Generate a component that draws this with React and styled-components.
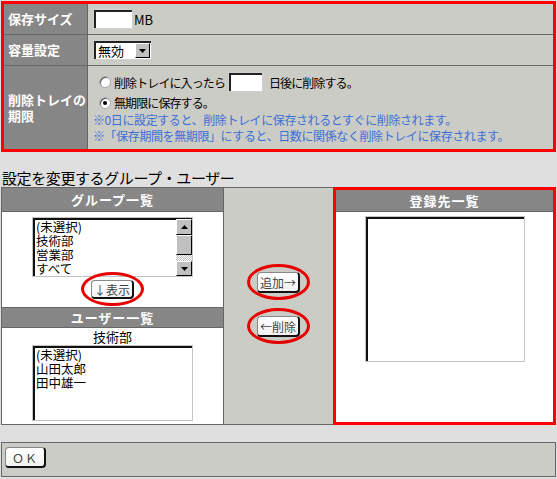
import styled, { createGlobalStyle } from 'styled-components'

const GlobalStyle = createGlobalStyle`
  body {
    margin: 0;
    background: #dfdfdf;
    font-family: "Noto Sans CJK JP", "Noto Sans", sans-serif;
    font-size: 12px;
    color: #000;
  }
  * { box-sizing: border-box; }
`

const darkTexture = `
  background-color: #878787;
  background-image: repeating-conic-gradient(#8b8b8b 0% 25%, #828282 0% 50%);
  background-size: 2px 2px;
`
const lightTexture = `
  background-color: #cbccc5;
  background-image: repeating-conic-gradient(#cfd0c9 0% 25%, #c7c8c1 0% 50%);
  background-size: 2px 2px;
`

const Page = styled.div`
  width: 557px;
  padding: 1px 1px 0 1px;
`

const SettingsBox = styled.div`
  border: 3px solid #f00;
  display: grid;
  grid-template-columns: 84px 1fr;
  grid-template-rows: 31px 31px 83px;
`

const Label = styled.div`
  ${darkTexture}
  display: flex;
  align-items: center;
  padding-left: 4px;
  color: #fff;
  font-weight: bold;
  font-size: 13px;
  line-height: 16px;
  border-right: 1px solid #666;
  border-bottom: ${p => (p.$last ? 'none' : '1px solid #666')};
`

const Value = styled.div`
  ${lightTexture}
  display: flex;
  align-items: center;
  padding-left: 5px;
  border-bottom: ${p => (p.$last ? 'none' : '1px solid #666')};
`

const ValueStack = styled.div`
  ${lightTexture}
  display: flex;
  flex-direction: column;
  padding: 5px 0 0 5px;
`

const TextBox = styled.div`
  width: ${p => p.$w}px;
  height: 20px;
  flex-shrink: 0;
  background: #fff;
  border: 1px solid #d0d0d0;
  box-shadow: inset 2px 2px 0 #222;
  margin: 0 ${p => p.$mr || 0}px 0 ${p => p.$ml || 0}px;
`

const Unit = styled.span`
  font-size: 13px;
  margin-left: 1px;
`

const Select = styled.div`
  width: 59px;
  height: 20px;
  background: #fff;
  border: 1px solid #d0d0d0;
  box-shadow: inset 2px 2px 0 #222;
  display: flex;
  align-items: center;
  padding: 2px 1px 1px 4px;
  font-size: 13px;
`

const SelectText = styled.span`
  flex: 1;
`

const ArrowBtn = styled.span`
  width: 15px;
  height: 15px;
  background: #c0c0c0;
  border: 1px solid;
  border-color: #fff #000 #000 #fff;
  display: flex;
  align-items: center;
  justify-content: center;
`

const RadioLine = styled.div`
  display: flex;
  align-items: center;
  height: ${p => p.$h}px;
  padding-left: 6px;
  font-size: 12px;
  letter-spacing: -0.9px;
`

const Radio = styled.span`
  width: 12px;
  height: 12px;
  border-radius: 50%;
  background: #fff;
  border: 1px solid #aaa;
  box-shadow: inset 1px 1px 0 #555;
  margin-right: 3px;
  display: flex;
  align-items: center;
  justify-content: center;
  &::after {
    content: '';
    width: 4px;
    height: 4px;
    border-radius: 50%;
    background: ${p => (p.$checked ? '#000' : 'transparent')};
  }
`

const Note = styled.div`
  color: #3b6fd8;
  font-size: 12px;
  letter-spacing: -0.4px;
  height: 16px;
  line-height: 16px;
`

const Heading = styled.div`
  height: 35px;
  padding: 16px 0 0 1px;
  font-size: 15px;
  line-height: 19px;
  letter-spacing: -0.4px;
`

const Columns = styled.div`
  display: flex;
  height: 238px;
`

const LeftColumn = styled.div`
  width: 223px;
  border: 1px solid #666;
  background: #fff;
  display: flex;
  flex-direction: column;
`

const MiddleColumn = styled.div`
  ${lightTexture}
  width: 109px;
  border-top: 1px solid #666;
  border-bottom: 1px solid #666;
  display: flex;
  flex-direction: column;
  align-items: center;
  gap: 23px;
  padding-top: 84px;
`

const RightColumn = styled.div`
  flex: 1;
  border: 3px solid #f00;
  background: #fff;
  display: flex;
  flex-direction: column;
  align-items: center;
`

const ListHeader = styled.div`
  ${darkTexture}
  align-self: stretch;
  height: ${p => p.$h}px;
  flex-shrink: 0;
  display: flex;
  align-items: center;
  justify-content: center;
  color: #fff;
  font-weight: bold;
  font-size: 13px;
  letter-spacing: 1px;
  border-bottom: 1px solid #666;
  border-top: ${p => (p.$top ? '1px solid #666' : 'none')};
`

const Area = styled.div`
  height: ${p => p.$h}px;
  display: flex;
  flex-direction: column;
  align-items: center;
  padding-top: ${p => p.$pt}px;
  gap: ${p => p.$gap || 0}px;
`

const Caption = styled.div`
  font-size: 13px;
  line-height: 16px;
`

const ListBox = styled.div`
  width: ${p => p.$w}px;
  height: ${p => p.$h}px;
  margin-top: ${p => p.$mt || 0}px;
  background: #fff;
  border: 1px solid #c4c4c4;
  box-shadow: inset 2px 2px 0 #111;
  display: flex;
  padding: 2px 0 0 2px;
  flex-shrink: 0;
`

const Items = styled.div`
  flex: 1;
  padding-left: 1px;
  font-size: 12.5px;
  line-height: 14px;
`

const Scrollbar = styled.div`
  width: 16px;
  display: flex;
  flex-direction: column;
  margin-top: -1px;
`

const ScrollBtn = styled.div`
  height: ${p => p.$h}px;
  background: #c0c0c0;
  border: 1px solid;
  border-color: #fff #000 #000 #fff;
  display: flex;
  align-items: center;
  justify-content: center;
`

const Track = styled.div`
  flex: 1;
  background-image: repeating-conic-gradient(#fff 0% 25%, #c0c0c0 0% 50%);
  background-size: 2px 2px;
`

const Marked = styled.span`
  position: relative;
  display: inline-flex;
  &::after {
    content: '';
    position: absolute;
    inset: -8px -10px -7px -10px;
    border: 3px solid #e80000;
    border-radius: 50%;
  }
`

const Button = styled.button`
  height: ${p => p.$h || 19}px;
  padding: 0 ${p => p.$px || 2}px;
  font-family: inherit;
  font-size: 12px;
  letter-spacing: ${p => p.$ls || 0}px;
  color: #444;
  background: linear-gradient(#fff, #f2f2f2);
  border-style: solid;
  border-width: 1px 2px 2px 1px;
  border-color: #888 #111 #111 #888;
  border-radius: 4px;
  display: flex;
  align-items: center;
  justify-content: center;
`

const Footer = styled.div`
  ${lightTexture}
  margin-top: 17px;
  height: 35px;
  border: 1px solid #666;
  padding: 4px 0 0 3px;
`

const Triangle = ({ up }) => (
  <svg width="7" height="4" viewBox="0 0 7 4">
    <path d={up ? 'M3.5 0 L7 4 L0 4 Z' : 'M0 0 L7 0 L3.5 4 Z'} fill="#000" />
  </svg>
)

const App = () => {
  return (
    <Page>
      <GlobalStyle />
      <SettingsBox>
        <Label>保存サイズ</Label>
        <Value>
          <TextBox $w={40} />
          <Unit>MB</Unit>
        </Value>
        <Label>容量設定</Label>
        <Value>
          <Select>
            <SelectText>無効</SelectText>
            <ArrowBtn><Triangle /></ArrowBtn>
          </Select>
        </Value>
        <Label $last>削除トレイの<br />期限</Label>
        <ValueStack>
          <RadioLine $h={22}>
            <Radio />
            削除トレイに入ったら<TextBox $w={35} $ml={3} $mr={6} />日後に削除する。
          </RadioLine>
          <RadioLine $h={19}>
            <Radio $checked />
            無期限に保存する。
          </RadioLine>
          <Note>※0日に設定すると、削除トレイに保存されるとすぐに削除されます。</Note>
          <Note>※「保存期間を無期限」にすると、日数に関係なく削除トレイに保存されます。</Note>
        </ValueStack>
      </SettingsBox>

      <Heading>設定を変更するグループ・ユーザー</Heading>

      <Columns>
        <LeftColumn>
          <ListHeader $h={24}>グループ一覧</ListHeader>
          <Area $h={95} $pt={5} $gap={3}>
            <ListBox $w={161} $h={60}>
              <Items>
                (未選択)<br />技術部<br />営業部<br />すべて
              </Items>
              <Scrollbar>
                <ScrollBtn $h={16}><Triangle up /></ScrollBtn>
                <ScrollBtn $h={20} />
                <Track />
                <ScrollBtn $h={15}><Triangle /></ScrollBtn>
              </Scrollbar>
            </ListBox>
            <Marked>
              <Button>↓表示</Button>
            </Marked>
          </Area>
          <ListHeader $h={21} $top>ユーザー一覧</ListHeader>
          <Area $h={96} $pt={1}>
            <Caption>技術部</Caption>
            <ListBox $w={161} $h={76}>
              <Items>
                (未選択)<br />山田太郎<br />田中雄一
              </Items>
            </ListBox>
          </Area>
        </LeftColumn>

        <MiddleColumn>
          <Marked>
            <Button $h={21}>追加→</Button>
          </Marked>
          <Marked>
            <Button $h={21}>←削除</Button>
          </Marked>
        </MiddleColumn>

        <RightColumn>
          <ListHeader $h={22}>登録先一覧</ListHeader>
          <ListBox $w={160} $h={146} $mt={4} />
        </RightColumn>
      </Columns>

      <Footer>
        <Button $h={21} $px={6} $ls={1}>ＯＫ</Button>
      </Footer>
    </Page>
  )
}

export default App
